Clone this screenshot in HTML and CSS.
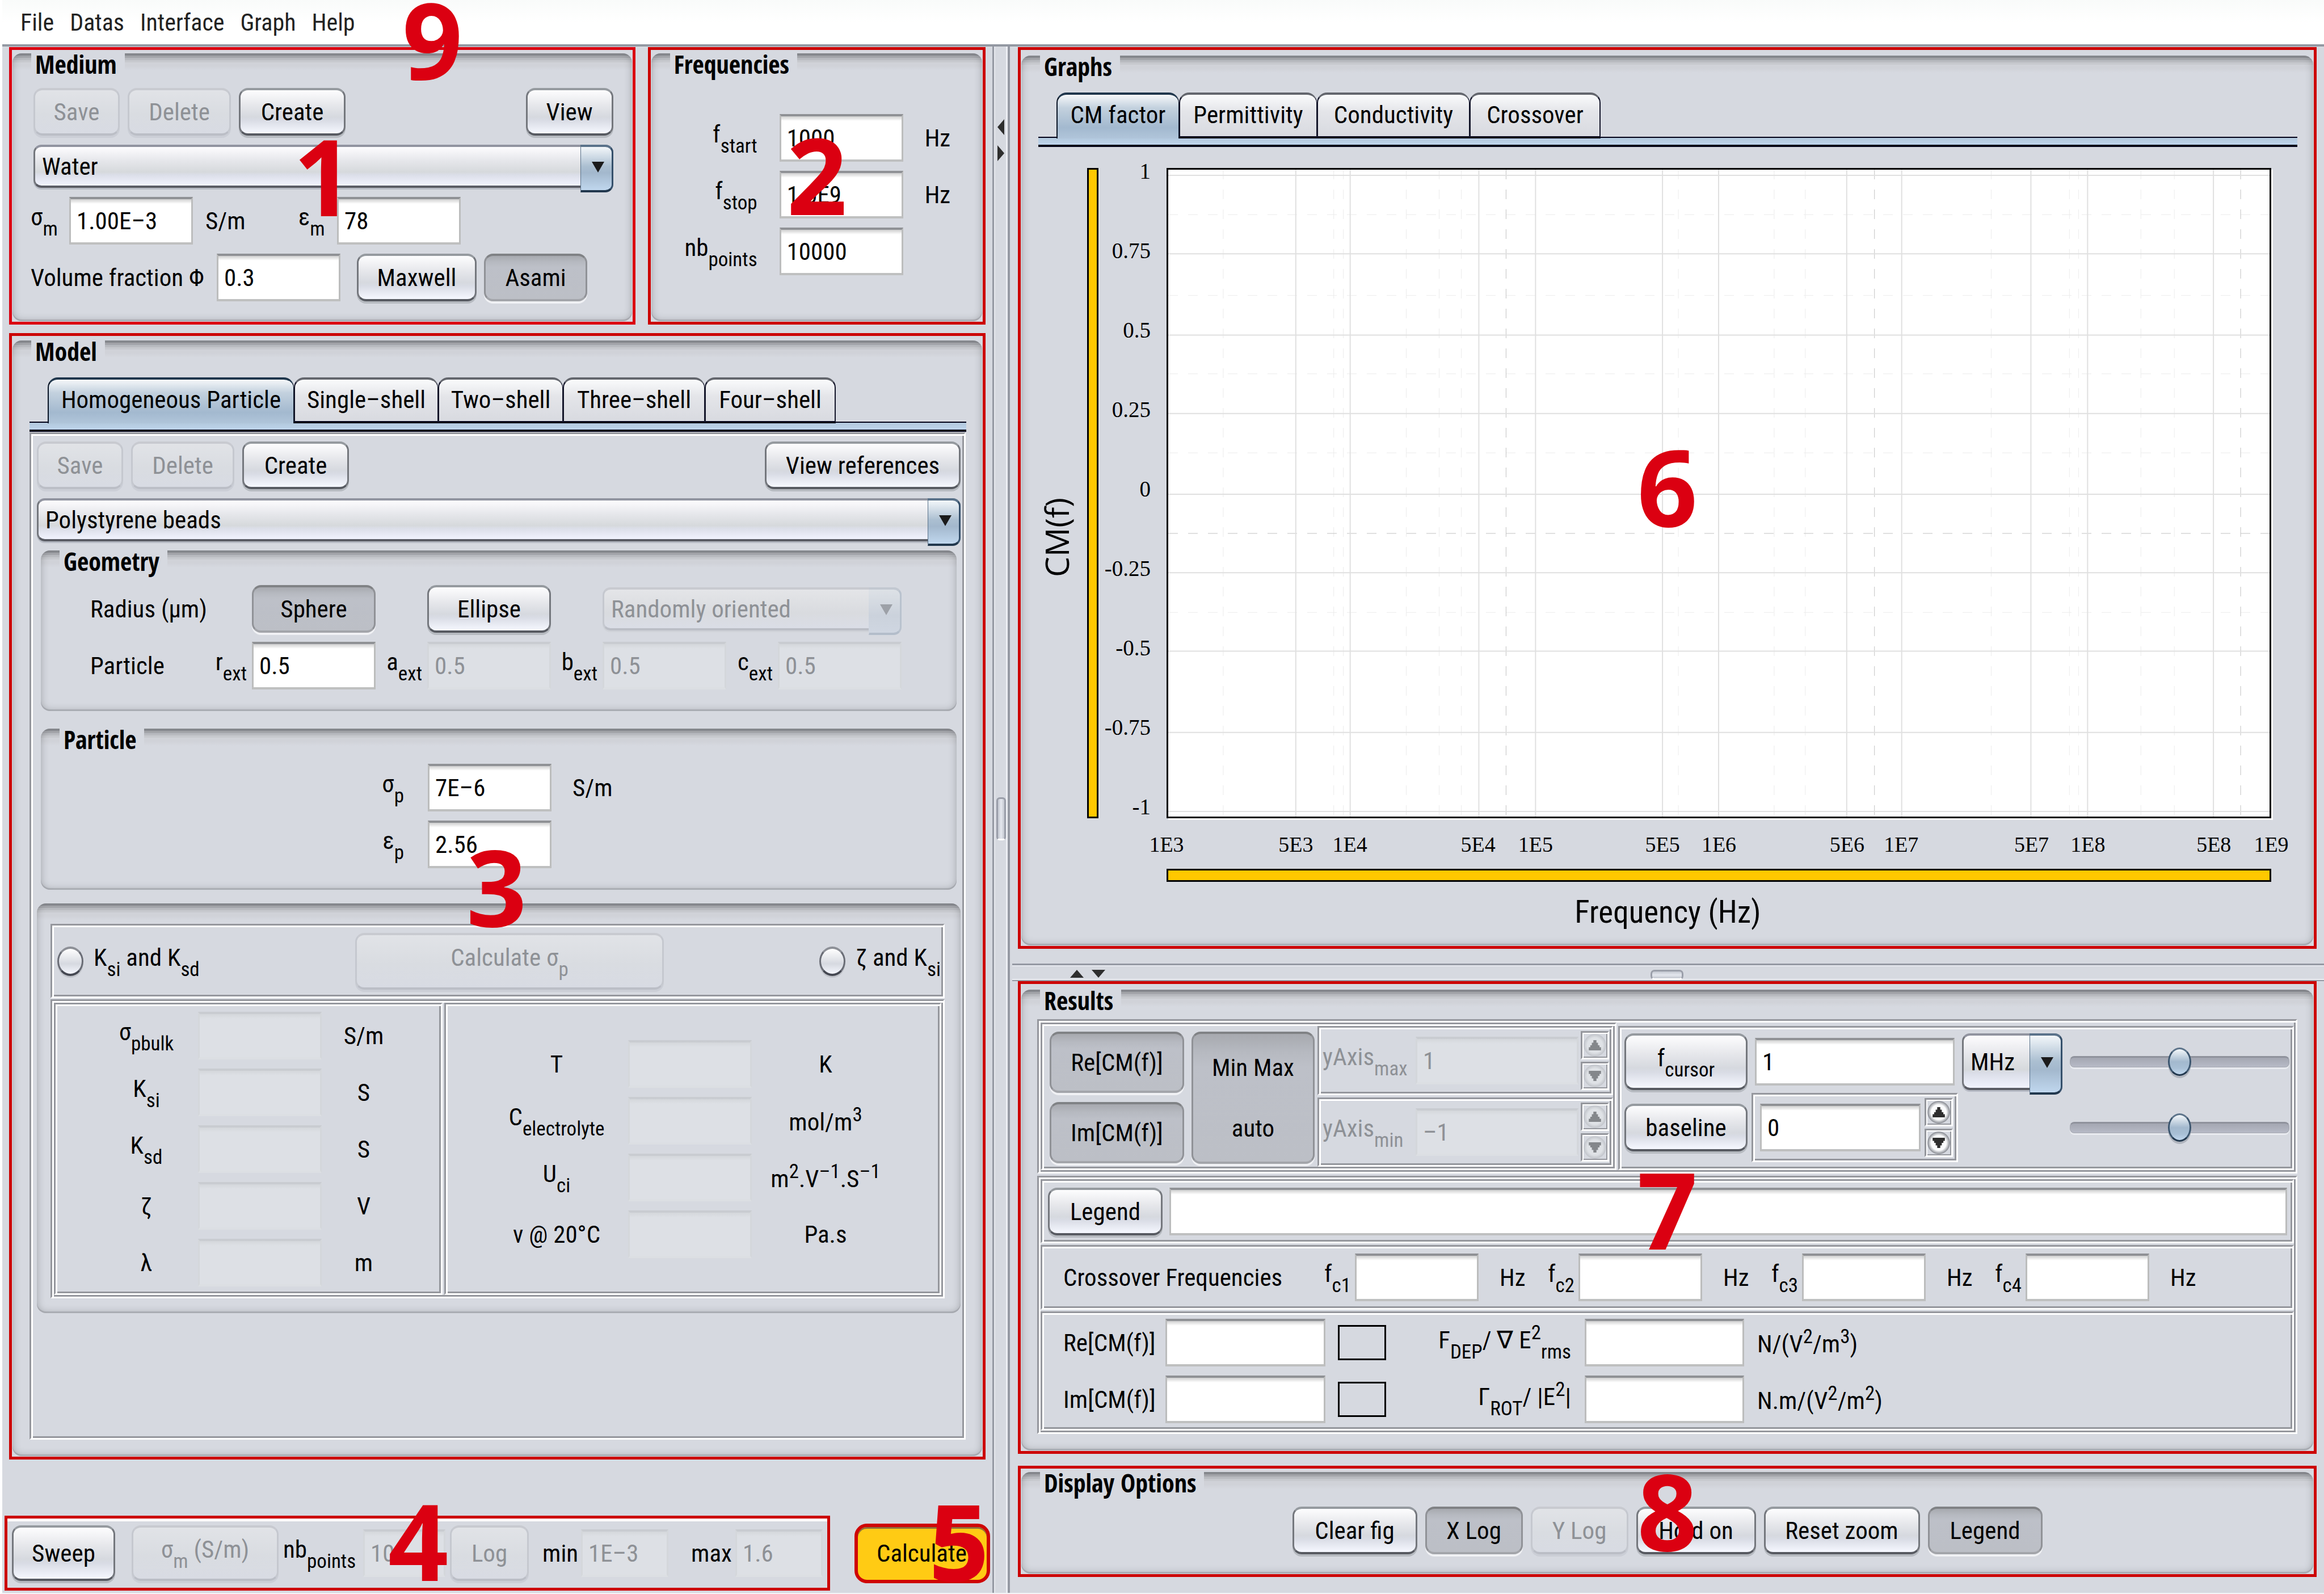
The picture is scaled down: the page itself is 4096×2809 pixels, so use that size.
FILE: index.html
```
<!DOCTYPE html>
<html lang="en">
<head>
<meta charset="utf-8">
<title>Clausius-Mossotti factor</title>
<link rel="stylesheet" href="styles.css">
</head>
<body>
<nav class="menubar">
  <a href="#">File</a><a href="#">Datas</a><a href="#">Interface</a><a href="#">Graph</a><a href="#">Help</a>
  <span class="mark mark-9">9</span>
</nav>
<main class="split">
  <div class="left-pane">
    <div class="top-row">
      <section class="frame frame-medium">
        <div class="titled">
          <h2>Medium</h2>
          <div class="medium">
            <div class="row row-in">
              <button class="w152" disabled>Save</button>
              <button class="w182" disabled>Delete</button>
              <button class="w188">Create</button>
              <button class="w154 push">View</button>
            </div>
            <div class="row-in"><span class="combo"><select aria-label="Medium"><option>Water</option></select></span></div>
            <div class="medium-values">
              <label for="sm">σ<sub>m</sub></label><input id="sm" value="1.00E–3"><span class="unit">S/m</span>
              <label for="em">ε<sub>m</sub></label><input id="em" value="78">
            </div>
            <div class="medium-mix">
              <label for="vf">Volume fraction Φ</label><input id="vf" value="0.3">
              <button class="w211 first">Maxwell</button><button class="w182 on">Asami</button>
            </div>
          </div>
        </div>
        <span class="mark mark-1">1</span>
      </section>
      <section class="frame frame-freq">
        <div class="titled">
          <h2>Frequencies</h2>
          <div class="freq">
            <label for="f1">f<sub>start</sub></label><input id="f1" value="1000"><span>Hz</span>
            <label for="f2">f<sub>stop</sub></label><input id="f2" value="1.0E9"><span>Hz</span>
            <label for="f3">nb<sub>points</sub></label><input id="f3" value="10000"><span></span>
          </div>
        </div>
        <span class="mark mark-2">2</span>
      </section>
    </div>

    <section class="frame frame-model">
      <div class="titled">
        <h2>Model</h2>
        <div class="tabs">
          <button class="tab w434 active">Homogeneous Particle</button><button class="tab w254">Single–shell</button><button class="tab w220">Two–shell</button><button class="tab w250">Three–shell</button><button class="tab w231">Four–shell</button>
        </div>
        <div class="strip"></div>
        <div class="etched model">
          <div class="row">
            <button class="w152" disabled>Save</button>
            <button class="w182" disabled>Delete</button>
            <button class="w188">Create</button>
            <button class="w345 push">View references</button>
          </div>
          <span class="combo"><select aria-label="Model"><option>Polystyrene beads</option></select></span>
          <div class="titled group">
            <h2>Geometry</h2>
            <div class="geometry">
              <span>Radius (μm)</span><i></i><button class="on">Sphere</button><i></i><button>Ellipse</button><i></i>
              <span class="combo off wide"><select aria-label="Orientation" disabled><option>Randomly oriented</option></select></span>
              <span>Particle</span>
              <label for="ra">r<sub>ext</sub></label><input id="ra" value="0.5">
              <label for="aa">a<sub>ext</sub></label><input id="aa" value="0.5" disabled>
              <label for="ba">b<sub>ext</sub></label><input id="ba" value="0.5" disabled>
              <label for="ca">c<sub>ext</sub></label><input id="ca" value="0.5" disabled>
            </div>
          </div>
          <div class="titled group particle-box">
            <h2>Particle</h2>
            <div class="particle">
              <label for="sp">σ<sub>p</sub></label><input id="sp" value="7E–6"><span>S/m</span>
              <label for="ep">ε<sub>p</sub></label><input id="ep" value="2.56"><span></span>
            </div>
          </div>
          <div class="titled surface">
            <div class="etched choice">
              <label class="radio"><input type="radio" name="k"><span>K<sub>si</sub> and K<sub>sd</sub></span></label>
              <button class="tall w544" disabled><span>Calculate σ<sub>p</sub></span></button>
              <label class="radio"><input type="radio" name="k"><span>ζ and K<sub>si</sub></span></label>
            </div>
            <div class="etched pair">
              <div class="etched bulk">
                <label for="b1">σ<sub>pbulk</sub></label><input id="b1" disabled><span>S/m</span>
                <label for="b2">K<sub>si</sub></label><input id="b2" disabled><span>S</span>
                <label for="b3">K<sub>sd</sub></label><input id="b3" disabled><span>S</span>
                <label for="b4">ζ</label><input id="b4" disabled><span>V</span>
                <label for="b5">λ</label><input id="b5" disabled><span>m</span>
              </div>
              <div class="etched bulk ions">
                <label for="c1">T</label><input id="c1" disabled><span>K</span>
                <label for="c2">C<sub>electrolyte</sub></label><input id="c2" disabled><span>mol/m<sup>3</sup></span>
                <label for="c3">U<sub>ci</sub></label><input id="c3" disabled><span>m<sup>2</sup>.V<sup>–1</sup>.S<sup>–1</sup></span>
                <label for="c4">ν @ 20°C</label><input id="c4" disabled><span>Pa.s</span>
              </div>
            </div>
          </div>
        </div>
      </div>
      <span class="mark mark-3">3</span>
    </section>

    <div class="bottom-row">
      <section class="frame sweep">
        <button class="tall w182">Sweep</button>
        <button class="tall w259" disabled><span>σ<sub>m</sub> (S/m)</span></button>
        <label class="nb" for="s1">nb<sub>points</sub></label><input id="s1" class="w145" value="10" disabled>
        <button class="tall w139" disabled>Log</button>
        <label class="min" for="s2">min</label><input id="s2" class="w154" value="1E–3" disabled>
        <label class="max" for="s3">max</label><input id="s3" class="w154" value="1.6" disabled>
        <span class="mark mark-4">4</span>
      </section>
      <div class="go">
        <button class="calculate">Calculate</button>
        <span class="mark mark-5">5</span>
      </div>
    </div>
  </div>

  <div class="divider-v">
    <svg class="arrows-v" viewBox="0 0 12 74"><path d="M12 0V28L0 14ZM0 46V74L12 60Z"/></svg>
    <span class="grip-v"></span>
  </div>

  <div class="right-pane">
    <section class="frame frame-graph deep">
      <div class="titled">
        <h2>Graphs</h2>
        <div class="tabs">
          <button class="tab w216 active">CM factor</button><button class="tab w243">Permittivity</button><button class="tab w269">Conductivity</button><button class="tab w231">Crossover</button>
        </div>
        <div class="strip"></div>
        <div class="graph">
          <div class="y-title">CM(f)</div>
          <div class="bar"></div>
          <div class="y-ticks"><span>1</span><span>0.75</span><span>0.5</span><span>0.25</span><span>0</span><span>-0.25</span><span>-0.5</span><span>-0.75</span><span>-1</span></div>
          <div class="plot">
            <svg viewBox="0 0 1943 1138" preserveAspectRatio="none">
              <path class="minor" d="M97 0V1138M292 0V1138M309 0V1138M420 0V1138M478 0V1138M517 0V1138M900 0V1138M1069 0V1138M1124 0V1138M1452 0V1138M1590 0V1138M1606 0V1138M1716 0V1138M1775 0V1138M0 79H1943M0 221H1943M0 359H1943M0 498H1943M0 779H1943"/>
              <path class="minor dark" d="M596 0V1138M1246 0V1138M1892 0V1138M0 640H1943"/>
              <path class="major" d="M225 0V1138M321 0V1138M548 0V1138M648 0V1138M872 0V1138M971 0V1138M1197 0V1138M1294 0V1138M1522 0V1138M1622 0V1138M1844 0V1138M0 10H1943M0 148H1943M0 291H1943M0 429H1943M0 571H1943M0 709H1943M0 847H1943M0 990H1943M0 1129H1943"/>
            </svg>
          </div>
          <div class="x-ticks">
            <span style="left:0%">1E3</span><span style="left:11.7%">5E3</span><span style="left:16.6%">1E4</span><span style="left:28.2%">5E4</span><span style="left:33.4%">1E5</span><span style="left:44.9%">5E5</span><span style="left:50%">1E6</span><span style="left:61.6%">5E6</span><span style="left:66.5%">1E7</span><span style="left:78.3%">5E7</span><span style="left:83.4%">1E8</span><span style="left:94.8%">5E8</span><span style="left:100%">1E9</span>
          </div>
          <div class="bar bar-x"></div>
          <div class="x-title">Frequency (Hz)</div>
        </div>
      </div>
      <span class="mark mark-6">6</span>
    </section>

    <div class="divider-h">
      <svg class="arrows-h" viewBox="0 0 62 14"><path d="M0 14H24L12 0ZM38 0H62L50 14Z"/></svg>
      <span class="grip-h"></span>
    </div>

    <section class="frame frame-results deep">
      <div class="titled">
        <h2>Results</h2>
        <div class="etched controls">
          <div class="etched view">
            <div class="modes">
              <button class="on">Re[CM(f)]</button>
              <button class="on auto"><span>Min Max</span><span>auto</span></button>
              <button class="on">Im[CM(f)]</button>
            </div>
            <div class="limits">
              <div class="etched limit off">
                <label for="y1">yAxis<sub>max</sub></label><input id="y1" value="1" disabled>
                <div class="spin"><button aria-label="Increase" disabled><svg viewBox="0 0 24 20"><path d="M9 0H15V5H18V10H21V14H24V20H0V14H3V10H6V5H9Z"/></svg></button><button aria-label="Decrease" disabled><svg viewBox="0 0 24 20"><path d="M0 0H24V6H21V10H18V15H15V20H9V15H6V10H3V6H0Z"/></svg></button></div>
              </div>
              <div class="etched limit off">
                <label for="y2">yAxis<sub>min</sub></label><input id="y2" value="–1" disabled>
                <div class="spin"><button aria-label="Increase" disabled><svg viewBox="0 0 24 20"><path d="M9 0H15V5H18V10H21V14H24V20H0V14H3V10H6V5H9Z"/></svg></button><button aria-label="Decrease" disabled><svg viewBox="0 0 24 20"><path d="M0 0H24V6H21V10H18V15H15V20H9V15H6V10H3V6H0Z"/></svg></button></div>
              </div>
            </div>
          </div>
          <div class="etched cursor">
            <button class="tall"><span>f<sub>cursor</sub></span></button>
            <input aria-label="Cursor frequency" value="1">
            <span class="combo tall"><select aria-label="Unit"><option>MHz</option></select></span>
            <input type="range" aria-label="Cursor">
            <button>baseline</button>
            <div class="etched limit base">
              <input aria-label="Baseline value" value="0">
              <div class="spin"><button aria-label="Increase"><svg viewBox="0 0 24 20"><path d="M9 0H15V5H18V10H21V14H24V20H0V14H3V10H6V5H9Z"/></svg></button><button aria-label="Decrease"><svg viewBox="0 0 24 20"><path d="M0 0H24V6H21V10H18V15H15V20H9V15H6V10H3V6H0Z"/></svg></button></div>
            </div>
            <i></i>
            <input type="range" aria-label="Baseline">
          </div>
        </div>
        <div class="etched outputs">
          <div class="etched legend-row"><button class="w202">Legend</button><input aria-label="Legend"></div>
          <div class="etched crossings">
            <span class="name">Crossover Frequencies</span>
            <label for="x1">f<sub>c1</sub></label><input id="x1"><span class="hz">Hz</span>
            <label for="x2">f<sub>c2</sub></label><input id="x2"><span class="hz">Hz</span>
            <label for="x3">f<sub>c3</sub></label><input id="x3"><span class="hz">Hz</span>
            <label for="x4">f<sub>c4</sub></label><input id="x4"><span class="hz">Hz</span>
          </div>
          <div class="etched values">
            <label for="v1">Re[CM(f)]</label><input id="v1"><span class="swatch"></span>
            <label class="force" for="v2">F<sub>DEP</sub>/ ∇ E<sup>2</sup><sub>rms</sub></label><input id="v2"><span class="si">N/(V<sup>2</sup>/m<sup>3</sup>)</span>
            <label for="v3">Im[CM(f)]</label><input id="v3"><span class="swatch"></span>
            <label class="force" for="v4">Γ<sub>ROT</sub>/ |E<sup>2</sup>|</label><input id="v4"><span class="si">N.m/(V<sup>2</sup>/m<sup>2</sup>)</span>
          </div>
        </div>
      </div>
      <span class="mark mark-7">7</span>
    </section>

    <section class="frame frame-display">
      <div class="titled">
        <h2>Display Options</h2>
        <div class="row display">
          <button class="w220">Clear fig</button><button class="w172 on">X Log</button><button class="w172" disabled>Y Log</button><button class="w211">Hold on</button><button class="w275">Reset zoom</button><button class="w202 on">Legend</button>
        </div>
      </div>
      <span class="mark mark-8">8</span>
    </section>
  </div>
</main>
</body>
</html>
```
FILE: styles.css
```
:root {
  --bg: #d6d9e0;
  --line: #95979d;
  --red: #cc0000;
  --mark: #db0011;
}
* { box-sizing: border-box; }
body {
  margin: 0;
  min-height: 100vh;
  display: flex;
  flex-direction: column;
  border-left: 4px solid #fff;
  border-bottom: 2px solid #f4f5f7;
  background: var(--bg);
  color: #000;
  font-family: "Roboto Condensed", "Open Sans", sans-serif;
  font-size: 43px;
  line-height: 50px;
}
sub, sup { font-size: 35px; line-height: 34px; }
sub { vertical-align: -18px; }
sup { vertical-align: 16px; }
label, span { white-space: nowrap; }

/* menu bar */
.menubar {
  position: relative;
  display: flex;
  gap: 28px;
  height: 82px;
  padding: 15px 32px 0;
  border-bottom: 4px solid #9398a2;
  background: linear-gradient(#f9fbfa, #fff 40px);
  font-size: 42px;
}
.menubar a { color: #222; text-decoration: none; }

/* panes */
.split {
  flex: 1;
  display: grid;
  grid-template-columns: 1745fr 31px 2316fr;
}
.left-pane, .right-pane { display: flex; flex-direction: column; min-width: 0; }
.left-pane { padding: 1px 12px 4px; }
.right-pane { padding: 1px 13px 28px 14px; }
.top-row { display: grid; grid-template-columns: 1103fr 595fr; gap: 22px; margin-bottom: 15px; }

.divider-v {
  position: relative;
  border-left: 3px solid #9599a3;
  border-right: 4px solid #9599a3;
  box-shadow: inset 2px 0 #e6e8ee, inset -3px 0 #eceef3;
}
.arrows-v { position: absolute; left: 6px; top: 128px; width: 12px; height: 74px; fill: #2e2e2e; }
.grip-v {
  position: absolute; left: 4px; top: calc(50% - 40px); width: 17px; height: 76px;
  border: 3px solid #9a9ea9; border-bottom-color: #fff; border-radius: 6px;
  background: linear-gradient(90deg, #c3c7d0, #e4e7ee, #c3c7d0);
}
.divider-h {
  position: relative;
  height: 31px;
  margin: 26px -13px 0 -10px;
  border-top: 3px solid #9599a3;
  border-bottom: 2px solid #9599a3;
  box-shadow: inset 0 2px #e6e8ee, inset 0 -2px #eceef3;
}
.arrows-h { position: absolute; left: 102px; top: 8px; width: 62px; height: 14px; fill: #2e2e2e; }
.grip-h {
  position: absolute; left: calc(50% - 31px); top: 8px; width: 58px; height: 18px;
  border: 3px solid #9a9ea9; border-bottom-color: #fff; border-radius: 7px;
  background: linear-gradient(#c3c7d0, #e4e7ee, #c3c7d0);
}

/* framed and titled panels */
.frame { position: relative; display: flex; padding: 6px 1px 1px; border: 5px solid var(--red); }
.frame.deep { padding-top: 10px; }
.frame-medium { border-color: var(--mark); }
.titled {
  flex: 1;
  min-width: 0;
  display: flex;
  flex-direction: column;
  border-radius: 16px;
  background: linear-gradient(#919399 4px, #aaacb1 4px 8px, #bcbec3 8px 12px, #c8cacf 12px 16px, #d0d2d8 16px 22px, var(--bg) 30px);
  box-shadow: inset 0 0 14px rgba(60, 62, 66, .35), inset 0 -3px 0 rgba(60, 62, 66, .16);
}
.titled h2 {
  width: fit-content;
  margin: 0 0 0 33px;
  padding: 0 14px 4px 7px;
  background: var(--bg);
  font: bold 44px/38px "Open Sans Condensed", "Open Sans", sans-serif;
}
.etched {
  padding: 3px;
  border: 3px solid;
  border-color: var(--line) #fff #fff var(--line);
  box-shadow: inset 3px 3px #fff, inset -3px -3px var(--line);
}

/* buttons */
button {
  height: 84px;
  margin: 0;
  padding: 0;
  border: 3px solid;
  border-width: 4px 3px;
  border-color: #959a9f #74777d #575a61;
  border-radius: 16px;
  background: linear-gradient(#fdfdfe, #e6e7eb 35%, #d6d9df 62%, #d9dce5 70%, #f6f8ff);
  box-shadow: 0 4px #b6bac0;
  color: #000;
  font: inherit;
  white-space: nowrap;
}
button.tall { height: 100px; }
button:disabled {
  border-color: #c8cad0 #c5c8cf #bbbec6;
  background: linear-gradient(#e1e3e7, #d9dce1 55%, #d8dbe3);
  box-shadow: 0 4px #cbced6;
  color: #8e9196;
}
button.on {
  border-color: #808285 #909297 #a3a5aa;
  background: linear-gradient(#a7a9af, #b6b9c0 14%, #bdc0c8 26%, #bcbfc6);
  box-shadow: 0 4px #f0f1f4;
}
.w139 { width: 139px; } .w152 { width: 152px; } .w154 { width: 154px; } .w172 { width: 172px; }
.w145 { width: 145px; } .w182 { width: 182px; } .w188 { width: 188px; } .w202 { width: 202px; }
.w211 { width: 211px; } .w216 { width: 216px; } .w220 { width: 220px; } .w231 { width: 231px; }
.w243 { width: 243px; } .w250 { width: 250px; } .w254 { width: 254px; } .w259 { width: 259px; }
.w269 { width: 269px; } .w275 { width: 275px; } .w345 { width: 345px; } .w434 { width: 434px; }
.w544 { width: 544px; }
.row { display: flex; gap: 14px; }
.push { margin-left: auto; }

/* text boxes */
input {
  width: 218px;
  min-width: 0;
  height: 84px;
  margin: 0;
  padding: 0 10px;
  border: 3px solid;
  border-width: 4px 3px;
  border-color: #8f9195 #bcbdbd #bfc0c0;
  border-radius: 0;
  background: linear-gradient(#cfcfcf, #fff 8px);
  color: #000;
  font: inherit;
}
input:disabled {
  border-color: #c9ccd1 #d4d7db #dcdfe3;
  background: linear-gradient(#d4d7db, #dde0e5 8px);
  color: #8e9196;
}

/* drop-downs */
.combo { position: relative; display: block; height: 76px; }
.combo select {
  width: 100%;
  height: 100%;
  padding: 0 12px;
  appearance: none;
  border: 3px solid;
  border-width: 4px 3px;
  border-color: #9194a0 #74777d #5a5c64;
  border-radius: 14px;
  background: linear-gradient(#fdfcfe, #e6e7eb 35%, #d6d9dc 65%, #dbdee8 72%, #f1f3fe);
  box-shadow: 0 3px #b6bac4;
  color: #000;
  font: inherit;
}
.combo::before {
  content: "";
  position: absolute; right: 0; top: 0; width: 54px; height: 100%;
  border: 3px solid;
  border-width: 4px 3px 4px 1px;
  border-color: #5a728a #35506b #22384e #5a728a;
  border-radius: 0 14px 14px 0;
  background: linear-gradient(#f3f7fa, #abbfd1 45%, #a3b8cd 60%, #c0d7ee);
  pointer-events: none;
}
.combo::after {
  content: "";
  position: absolute; right: 16px; top: calc(50% - 8px);
  border: solid transparent;
  border-width: 19px 11px 0;
  border-top-color: #1b1b1b;
  pointer-events: none;
}
.combo.tall { height: 100px; }
.combo.off select {
  opacity: 1;
  border-color: #c8cad0 #c5c8cf #bbbec6;
  background: linear-gradient(#e4e5e8, #d9dbdf 60%, #dadde6);
  box-shadow: 0 3px #cfd2d8;
  color: #8e9196;
}
.combo.off::before { border-color: #c2c8d1 #b9c2ce #b3bdca transparent; background: linear-gradient(#dde1e6, #cbd2dc 60%, #cfd6e1); }
.combo.off::after { border-top-color: #9da1a8; }

/* tabs */
.tabs { display: flex; margin: 23px 28px 0 30px; padding-left: 32px; }
.tab {
  position: relative;
  height: 81px;
  margin-bottom: -3px;
  padding-bottom: 4px;
  border-width: 4px 1px 4px 2px;
  border-color: #63666d #14162a #020218 #14162a;
  border-radius: 18px 18px 0 0;
  background: linear-gradient(#fafbfc, #e4e5e9 40%, #d8dae0);
  box-shadow: none;
}
.tab:last-child { border-right-width: 2px; }
.tab.active {
  border-bottom: 0;
  padding-bottom: 8px;
  border-color: #1f364c #0a1526;
  background: linear-gradient(#f6f8fa, #c3d1de 30%, #a3b9cf 75%, #b0c5da);
}
.strip {
  height: 18px;
  margin: 0 28px 0 30px;
  border-top: 2px solid #020218;
  border-bottom: 4px solid #020218;
  background: linear-gradient(#b2c8dd, #bfd5ec);
}

/* medium */
.medium { display: grid; gap: 16px; padding: 19px 33px 35px 32px; }
.row-in { padding-left: 5px; }
.medium-values, .medium-mix { display: flex; align-items: center; }
.medium-values label { width: 68px; }
.medium-values .unit { width: 186px; padding-left: 22px; }
.medium-mix label { width: 328px; }
.medium-mix .first { margin: 0 13px 0 29px; }

/* frequencies */
.freq { display: grid; grid-template-columns: 226px 218px 1fr; row-gap: 16px; align-items: center; padding-top: 65px; }
.freq label { padding-right: 39px; text-align: right; }
.freq span { padding-left: 38px; }

/* model */
.frame-model { flex: 1; padding-top: 8px; }
.model { flex: 1; display: flex; flex-direction: column; gap: 16px; margin: 1px 29px 29px 30px; padding: 13px 6px 3px 10px; }
.group { flex: none; margin: 0 7px; }
.geometry {
  display: grid;
  grid-template-columns: 194px repeat(4, 91px 218px);
  row-gap: 16px;
  align-items: center;
  padding: 19px 0 38px 87px;
}
.geometry label { padding-right: 9px; text-align: right; }
.geometry .wide { grid-column: span 3; }
.particle-box { margin-top: 15px; }
.particle { display: grid; grid-template-columns: 682px 218px 1fr; row-gap: 16px; align-items: center; padding: 20px 0 38px; }
.particle label { padding-right: 42px; text-align: right; }
.particle span { padding-left: 37px; }
.surface { flex: none; margin-top: 8px; padding: 36px 28px 26px 24px; gap: 2px; }
.choice { display: flex; align-items: center; justify-content: space-between; height: 131px; padding: 0 4px 0 9px; }
.radio { display: flex; align-items: center; gap: 18px; }
.radio input {
  appearance: none;
  width: 46px; height: 52px;
  padding: 0;
  border: 3px solid;
  border-width: 4px 3px;
  border-color: #8d9097 #6a6d76 #454852;
  border-radius: 50%;
  background: linear-gradient(#fff, #d6d9e0 60%, #f4f6fd);
  box-shadow: 0 3px #bfc2c9;
}
.pair { display: flex; gap: 3px; height: 527px; }
.bulk {
  flex: 0 0 685px;
  display: grid;
  grid-template-columns: 248px 218px 148px;
  row-gap: 16px;
  align-items: center;
  align-content: center;
}
.bulk label, .bulk span { text-align: center; }
.bulk label { padding-left: 66px; }
.ions { flex: 1; grid-template-columns: 318px 219px 258px; }

/* sweep */
.bottom-row { display: flex; align-items: center; margin: 99px -8px 0; }
.sweep { flex: 0 0 1455px; height: 132px; align-items: center; padding: 0 0 0 8px; box-shadow: inset 0 5px #fff; }
.sweep .nb { width: 149px; padding-left: 8px; }
.sweep .min { width: 92px; padding-left: 24px; }
.sweep .max { width: 118px; padding-left: 40px; }
.sweep .w259 { margin-left: 29px; }
.sweep .w139 { margin-left: 8px; }
.sweep .tall { height: 98px; }
.go { position: relative; margin-left: 43px; }
.calculate {
  width: 239px; height: 105px;
  padding-left: 33px;
  border: 6px solid #cf0505;
  border-radius: 22px;
  background: #ffcb14;
  box-shadow: inset 0 3px #8f6d3c;
  text-align: left;
}

/* graph */
.frame-graph { flex: 1; }
.graph {
  flex: 1;
  display: grid;
  grid-template-columns: 48px 20px 64px 1fr;
  grid-template-rows: 1fr 68px 44px 86px;
  column-gap: 28px;
  margin: 37px 74px 26px 40px;
}
.bar { border: 3px solid #000; background: #ffc800; }
.y-title { writing-mode: vertical-rl; transform: rotate(180deg); justify-self: start; align-self: center; padding-bottom: 156px; font: 57px/44px "Open Sans", sans-serif; }
.y-ticks { display: flex; flex-direction: column; justify-content: space-between; align-items: flex-end; margin-top: -14px; font: 39px/40px "Liberation Serif", serif; }
.plot { position: relative; min-height: 600px; border: 3px solid #000; background: #fff; box-shadow: 3px 3px #fff; }
.plot svg { position: absolute; inset: 0; width: 100%; height: 100%; }
.plot path { fill: none; vector-effect: non-scaling-stroke; }
.major { stroke: #e0e0e0; stroke-width: 2px; }
.minor { stroke: #ececec; stroke-width: 1px; stroke-dasharray: 17 18; }
.minor.dark { stroke: #c2c2c2; }
.x-ticks { grid-column: 4; position: relative; margin-top: 24px; font: 38px/44px "Liberation Serif", serif; }
.x-ticks span { position: absolute; transform: translateX(-50%); }
.bar-x { grid-column: 4; margin-top: 21px; height: 23px; }
.x-title { grid-column: 1 / -1; padding: 20px 0 0 36px; text-align: center; font-size: 55px; line-height: 66px; }

/* results */
.controls { display: flex; gap: 3px; margin: 10px 28px 4px; padding: 3px; }
.view { display: flex; flex: 0 0 1015px; padding: 3px; }
.modes { display: grid; grid-template-columns: 237px 217px; gap: 15px 13px; flex: none; padding: 10px 5px 5px 10px; }
.modes button { height: 108px; }
.modes .auto { grid-area: 1 / 2 / span 2; height: auto; }
.auto span { display: block; line-height: 107px; }
.limits { flex: 1; display: flex; flex-direction: column; gap: 4px; }
.limit { display: flex; align-items: center; gap: 4px; height: 122px; padding: 0 4px 0 6px; }
.limit label { flex: 0 0 160px; }
.limit input { flex: 1; }
.limit.off label { color: #8e9196; }
.spin { flex: 0 0 50px; display: flex; flex-direction: column; gap: 4px; }
.spin button {
  display: flex; align-items: center; justify-content: center;
  width: 50px; height: 50px;
  border: 3px solid;
  border-color: var(--line) #fff #fff var(--line);
  border-radius: 0;
  background: radial-gradient(closest-side, #fbfcfd 60%, #8d9097 88%, var(--bg) 92%);
  box-shadow: inset 2px 2px #fff, inset -2px -2px var(--line);
}
.spin svg { width: 24px; height: 18px; fill: #2e2e2e; }
.spin button:disabled { background: radial-gradient(closest-side, #dfe2e6 60%, #c3c6cc 88%, var(--bg) 92%); }
.spin button:disabled svg { fill: #84878b; }
.cursor {
  flex: 1;
  display: grid;
  grid-template-columns: 217px 352px 177px 1fr;
  gap: 5px 13px;
  align-items: center;
  align-content: start;
  margin-top: 6px;
  padding: 10px 5px 0 8px;
}
.cursor > input { width: 100%; }
.base { height: 122px; margin: 0 -6px; padding: 0 6px 0 12px; gap: 7px; }
input[type="range"] {
  appearance: none;
  height: 52px;
  padding: 0;
  border: 0;
  background: none;
}
input[type="range"]::-webkit-slider-runnable-track {
  height: 20px;
  border: 1px solid #a5a8b1;
  border-top: 3px solid #8f929c;
  border-radius: 8px;
  background: linear-gradient(#a4a7b2, #b7bac6);
  box-shadow: 0 3px #e9ebf0;
}
input[type="range"]::-webkit-slider-thumb {
  appearance: none;
  width: 41px; height: 50px;
  margin-top: -18px;
  border: 3px solid #3c566f;
  border-color: #5c738a #3c566f #22384e;
  border-radius: 50%;
  background: linear-gradient(#f3f7fa, #a3b9ce 50%, #a8bfd5 75%, #c0d7ee);
  box-shadow: 0 4px #b0b4bd;
}
.outputs { display: grid; gap: 3px; margin: 0 28px 29px; padding: 3px; }
.legend-row { display: flex; gap: 12px; padding: 12px 9px 11px 10px; }
.legend-row input { flex: 1; }
.crossings { display: flex; align-items: center; height: 114px; padding: 0 0 0 37px; }
.crossings .name { flex: 0 0 460px; }
.crossings label { flex: 0 0 54px; }
.crossings .hz { flex: 0 0 122px; padding-left: 37px; }
.values {
  display: grid;
  grid-template-columns: 180px 282px 108px 349px 281px 1fr;
  row-gap: 16px;
  align-items: center;
  padding: 10px 0 10px 37px;
}
.values input { width: 100%; }
.swatch { width: 85px; height: 62px; margin-left: 22px; border: 3px solid #000; }
.force { padding-right: 24px; text-align: right; }
.si { padding-left: 23px; }

/* display options */
.frame-display { margin-top: 21px; }
.display { justify-content: center; padding: 19px 0 34px; }

/* numbered call-outs */
.mark {
  position: absolute;
  width: 106px;
  color: var(--mark);
  font: bold 186px/136px "Open Sans", sans-serif;
  text-align: center;
  pointer-events: none;
}
.mark-9 { left: 705px; top: 0; z-index: 1; }
.mark-1 { left: 496px; top: 153px; }
.mark-2 { left: 240px; top: 151px; }
.mark-3 { left: 801px; top: 901px; }
.mark-4 { left: 671px; top: -30px; }
.mark-5 { left: 131px; top: -39px; }
.mark-6, .mark-7, .mark-8 { left: calc(50% - 53px); }
.mark-6 { top: 700px; }
.mark-7 { top: 328px; }
.mark-8 { top: 5px; }
```
